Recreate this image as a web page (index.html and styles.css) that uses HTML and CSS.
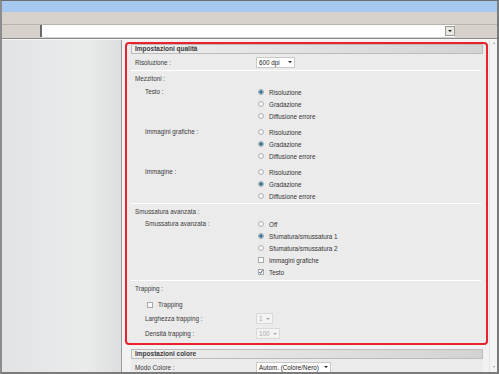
FILE: index.html
```html
<!DOCTYPE html>
<html lang="it">
<head>
  <meta charset="UTF-8">
  <meta name="viewport" content="width=device-width, initial-scale=1.0">
  <title>Impostazioni qualità</title>
  <link rel="stylesheet" href="styles.css">
</head>
<body>
  <div class="window">
    <div class="title-bar"></div>
    <div class="tool-bar"></div>

    <!-- Address field with its drop-down button -->
    <div class="address-bar">
      <div class="address-field">
        <span class="drop-btn"><span class="caret"></span></span>
      </div>
    </div>

    <div class="main">
      <div class="sidebar"></div>

      <div class="content">
        <!-- Highlighted quality block -->
        <div class="highlight">
          <div class="section-head">Impostazioni qualità</div>

          <div class="field top">
            <span class="field-label">Risoluzione :</span>
            <span class="select w-res"><span>600 dpi</span><span class="caret"></span></span>
          </div>

          <div class="sep"></div>

          <!-- Mezzitoni -->
          <div class="block halftone">
            <div class="block-title">Mezzitoni :</div>

            <div class="subgroup first">
              <span class="field-label sub">Testo :</span>
              <div class="options">
                <div class="option"><span class="radio checked"></span>Risoluzione</div>
                <div class="option"><span class="radio"></span>Gradazione</div>
                <div class="option"><span class="radio"></span>Diffusione errore</div>
              </div>
            </div>

            <div class="subgroup">
              <span class="field-label sub">Immagini grafiche :</span>
              <div class="options">
                <div class="option"><span class="radio"></span>Risoluzione</div>
                <div class="option"><span class="radio checked"></span>Gradazione</div>
                <div class="option"><span class="radio"></span>Diffusione errore</div>
              </div>
            </div>

            <div class="subgroup">
              <span class="field-label sub">Immagine :</span>
              <div class="options">
                <div class="option"><span class="radio"></span>Risoluzione</div>
                <div class="option"><span class="radio checked"></span>Gradazione</div>
                <div class="option"><span class="radio"></span>Diffusione errore</div>
              </div>
            </div>
          </div>

          <div class="sep"></div>

          <!-- Smussatura avanzata -->
          <div class="block smoothing">
            <div class="block-title">Smussatura avanzata :</div>

            <div class="subgroup">
              <span class="field-label sub">Smussatura avanzata :</span>
              <div class="options">
                <div class="option"><span class="radio"></span>Off</div>
                <div class="option"><span class="radio checked"></span>Sfumatura/smussatura 1</div>
                <div class="option"><span class="radio"></span>Sfumatura/smussatura 2</div>
                <div class="option"><span class="checkbox"></span>Immagini grafiche</div>
                <div class="option">
                  <span class="checkbox">
                    <svg viewBox="0 0 6 6" width="6" height="6"><polyline points="1.3,3 2.5,4.4 4.6,1.2" fill="none" stroke="#3f5f80" stroke-width="1"/></svg>
                  </span>Testo
                </div>
              </div>
            </div>
          </div>

          <div class="sep"></div>

          <!-- Trapping -->
          <div class="block trapping">
            <div class="block-title">Trapping :</div>

            <div class="check-row"><span class="checkbox"></span>Trapping</div>

            <div class="field wide">
              <span class="field-label sub">Larghezza trapping :</span>
              <span class="select disabled w-small"><span>1</span><span class="caret"></span></span>
            </div>

            <div class="field wide">
              <span class="field-label sub">Densità trapping :</span>
              <span class="select disabled w-mid"><span>100</span><span class="caret"></span></span>
            </div>
          </div>
        </div>

        <!-- Colour block, partly visible -->
        <div class="after">
          <div class="section-head">Impostazioni colore</div>
          <div class="field top panel">
            <span class="field-label">Modo Colore :</span>
            <span class="select w-mode"><span>Autom. (Colore/Nero)</span><span class="caret"></span></span>
          </div>
        </div>
      </div>

      <div class="scrollbar">
        <span class="arrow up"></span>
        <span class="arrow down"></span>
      </div>
    </div>
  </div>
</body>
</html>
```

FILE: styles.css
```css
/* Page reset and base font */
body {
  margin: 0;
  font-family: "Liberation Sans", Arial, sans-serif;
  font-size: 6.3px;
  color: #3a3a3a;
  background-color: #fff;
}

/* Browser window frame */
.window {
  width: 499px;
  height: 374px;
  box-sizing: border-box;
  border-top: 1px solid #6f6f6f;
  border-left: 2px solid #8c8c8c;
  border-right: 2px solid #7b7b7b;
  border-bottom: 2px solid #7b7b7b;
  display: flex;
  flex-direction: column;
  overflow: hidden;
}

.title-bar {
  height: 11px;
  background-color: #a8c9ef;
}

.tool-bar {
  height: 12px;
  background-color: #d6d2cb;
  border-bottom: 1px solid #b8b4ac;
}

.address-bar {
  height: 13px;
  background-color: #d6d2cb;
  border-bottom: 1px solid #8a8a8a;
  display: flex;
  align-items: flex-start;
}

.address-field {
  margin-left: 38px;
  width: 415px;
  height: 12px;
  box-sizing: border-box;
  background-color: #fff;
  border-left: 2px solid #6a6a6a;
  display: flex;
  justify-content: flex-end;
  align-items: center;
}

.drop-btn {
  width: 10px;
  height: 10px;
  box-sizing: border-box;
  background-color: #ebe8e2;
  border: 1px solid #9a9a9a;
  display: flex;
  justify-content: center;
  align-items: center;
}

/* Small down caret used in selects */
.caret {
  width: 0;
  height: 0;
  border-left: 2px solid transparent;
  border-right: 2px solid transparent;
  border-top: 2.5px solid #222;
}

/* Main area: sidebar, content, scrollbar */
.main {
  flex: 1;
  display: flex;
  border-top: 1px solid #f7f7f7;
  min-height: 0;
}

.sidebar {
  width: 119px;
  border-right: 1px solid #9c9c9c;
  background: linear-gradient(to right, #e1e3e4 0%, #e6e8e9 40%, #eaecec 70%, #dcdedf 100%);
}

.content {
  flex: 1;
  background-color: #f2f2f2;
  padding: 2px 1px 0 3px;
  overflow: hidden;
}

.scrollbar {
  width: 8px;
  background-color: #f4f4f4;
  border-left: 1px solid #e2e2e2;
  display: flex;
  flex-direction: column;
  justify-content: space-between;
  align-items: center;
  padding: 2px 0 4px;
  box-sizing: border-box;
}

.arrow {
  width: 0;
  height: 0;
  border-left: 1.5px solid transparent;
  border-right: 1.5px solid transparent;
}

.arrow.up {
  border-bottom: 2px solid #a0a0a0;
}

.arrow.down {
  border-top: 2px solid #a0a0a0;
}

/* Red highlight around the quality settings */
.highlight {
  border: 2px solid #e8232b;
  border-radius: 4px;
  background-color: #ebebeb;
  padding: 0 3px 2px 4px;
}

.section-head {
  height: 10px;
  box-sizing: border-box;
  line-height: 8px;
  padding-left: 3px;
  border: 1px solid #bcbcbc;
  background: linear-gradient(to right, #efefef, #d3d3d3);
  font-weight: bold;
  font-size: 6.5px;
  color: #3a3a3a;
}

/* Label + control rows */
.field {
  display: flex;
  align-items: center;
}

.field.top {
  height: 16px;
}

.field.wide {
  height: 15px;
}

.field-label {
  width: 125px;
  flex-shrink: 0;
  padding-left: 4px;
  box-sizing: border-box;
}

.field-label.sub {
  padding-left: 14px;
}

.sep {
  border-top: 1px solid #fff;
  margin-right: 2px;
}

.block {
  padding: 1px 0;
}

.block.smoothing {
  padding-bottom: 2px;
}

.block.trapping {
  padding-bottom: 0;
}

.block-title {
  line-height: 13px;
  padding-left: 4px;
}

.subgroup {
  display: flex;
  align-items: flex-start;
  margin-top: 4px;
}

.subgroup.first {
  margin-top: 1px;
}

.smoothing .subgroup {
  margin-top: 0;
}

.subgroup .field-label {
  line-height: 12px;
}

.options {
  display: flex;
  flex-direction: column;
}

.option {
  height: 12px;
  display: flex;
  align-items: center;
  color: #333;
}

/* Radio buttons and checkboxes */
.radio {
  width: 6px;
  height: 6px;
  box-sizing: border-box;
  border-radius: 50%;
  border: 1px solid #b3b3b3;
  background: radial-gradient(circle, #ffffff 0, #e4e4e4 100%);
  margin: 0 5px 0 2px;
}

.radio.checked {
  border-color: #9aa7b0;
  background: radial-gradient(circle, #2d6b97 0, #2d6b97 1.3px, #d6e2ea 2px);
}

.checkbox {
  width: 6px;
  height: 6px;
  box-sizing: border-box;
  border: 1px solid #a9a9a9;
  background-color: #fafafa;
  margin: 0 5px 0 2px;
  display: flex;
  justify-content: center;
  align-items: center;
}

.checkbox svg {
  display: block;
  flex-shrink: 0;
}

.check-row {
  height: 13px;
  margin-top: 3px;
  padding-left: 14px;
  display: flex;
  align-items: center;
}

/* Drop-down selects */
.select {
  height: 11px;
  box-sizing: border-box;
  border: 1px solid #c9c9c9;
  background-color: #fff;
  color: #222;
  padding: 0 2px 0 2px;
  display: flex;
  align-items: center;
}

.select .caret {
  margin-left: auto;
}

.select.disabled {
  color: #a9a9a9;
  border-color: #d9d9d9;
  background-color: #f3f3f3;
}

.select.disabled .caret {
  border-top-color: #a9a9a9;
}

.w-res {
  width: 39px;
}

.w-small {
  width: 17px;
}

.w-mid {
  width: 24px;
}

.w-mode {
  width: 75px;
}

/* Colour settings below the highlight */
.after {
  padding: 4px 5px 0 6px;
}

.panel {
  background-color: #ebebeb;
  height: 17px;
}
```
